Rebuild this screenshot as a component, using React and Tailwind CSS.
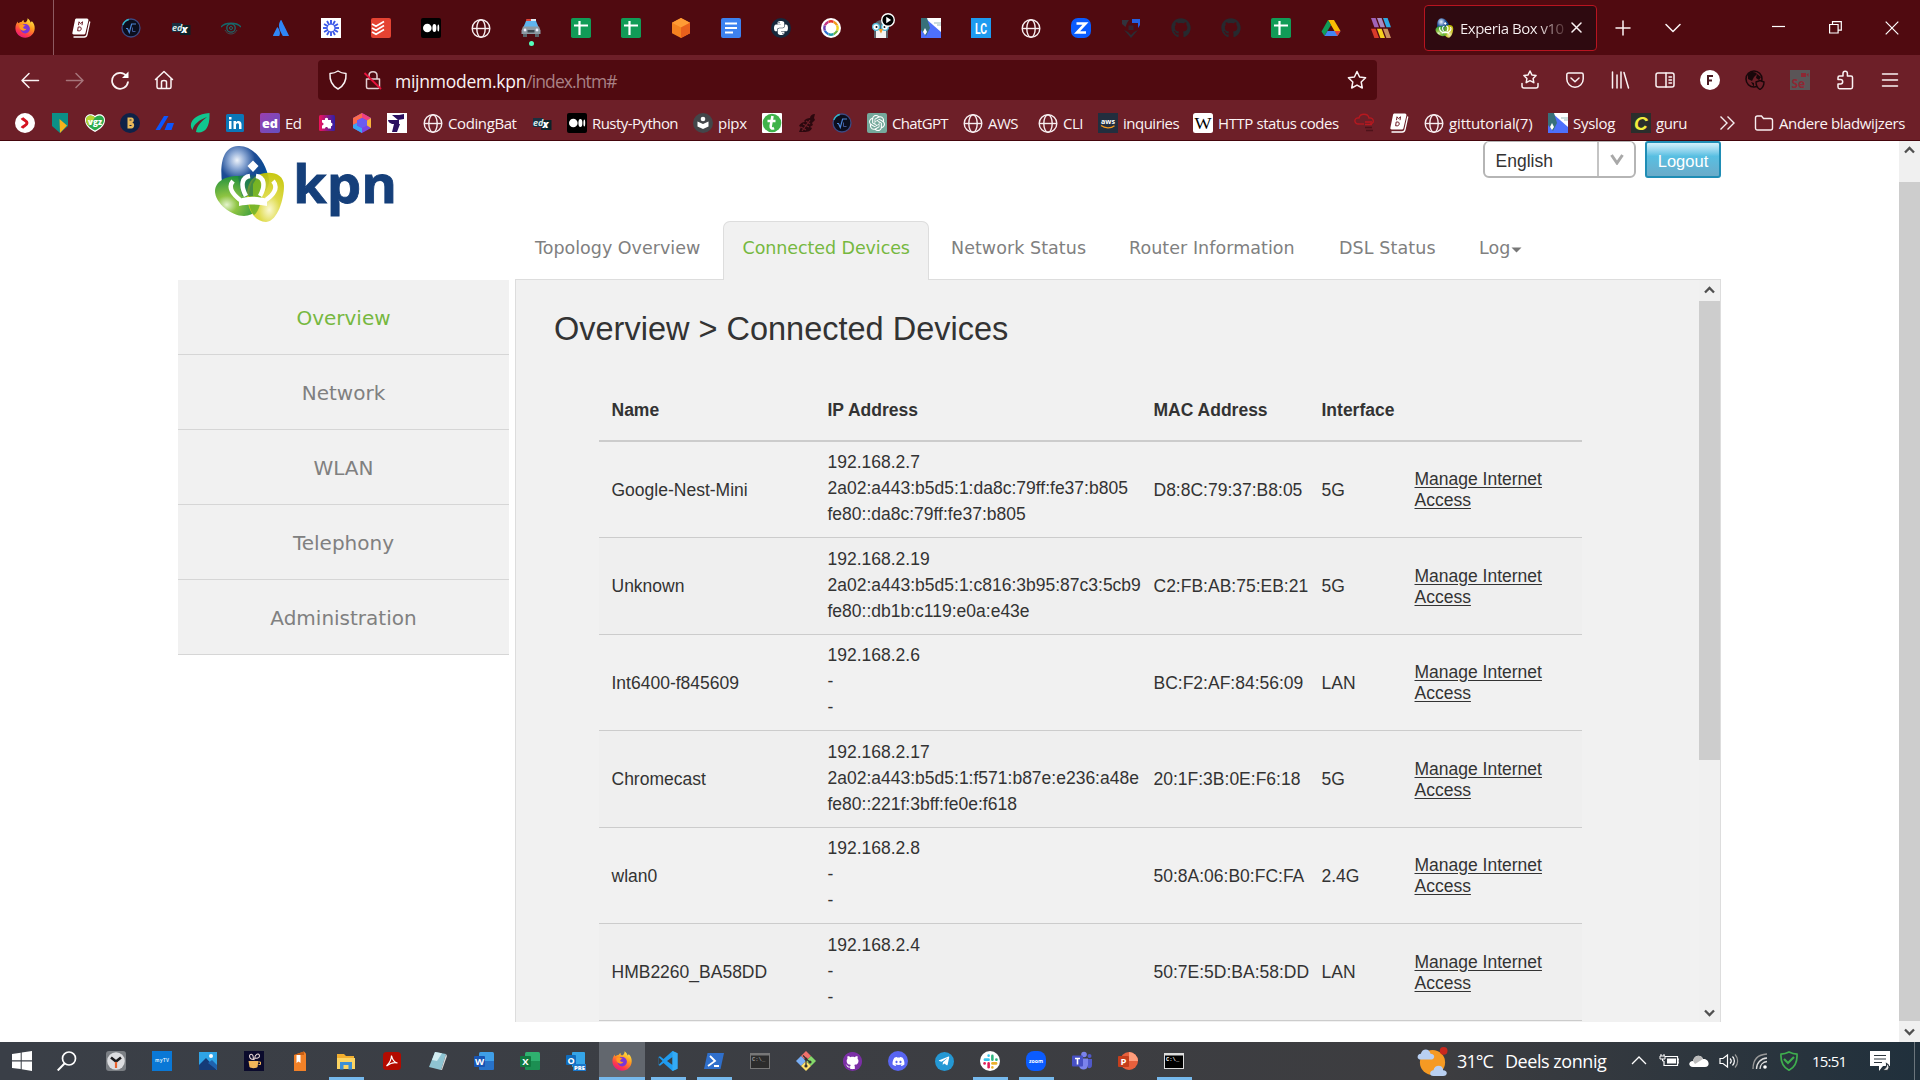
import React from "react";
import { FaGithub, FaPython, FaDiscord, FaTelegramPlane, FaAtlassian } from "react-icons/fa";
import { SiOpenai } from "react-icons/si";

const S = ({ children, size = 20, vb = "0 0 20 20" }) => (
  <svg width={size} height={size} viewBox={vb} fill="none" className="block shrink-0">{children}</svg>
);

/* ---------- site icons, 20 x 20 ---------- */
const Firefox = () => (
  <S>
    <defs>
      <linearGradient id="ffA" x1="0.8" y1="0" x2="0.25" y2="1"><stop offset="0" stopColor="#fff04a" /><stop offset=".4" stopColor="#ff9a1f" /><stop offset=".75" stopColor="#ff3a4a" /><stop offset="1" stopColor="#e31587" /></linearGradient>
    </defs>
    <path d="M12.6 0.2c2.2 1.6 2.6 3 3 4.2 1-.1 1-.9 1-1.3 2.6 2.2 3.2 5 3.1 7.5C19.500 16 15.300 19.700 10.200 19.700 4.800 19.700.5 15.600.4 10.300.4 7 1.600 5 2.800 3.600c0 .8.1 1.200.4 1.700C4.500 4 5.500 3.900 6.500 3.900 7 2.900 7.700 2.200 8.700 1.900c-.3 1.200 0 2 1.300 2.600 1.500-.4 2.700-2.200 2.600-4.300z" fill="url(#ffA)" />
    <circle cx="10.200" cy="10.800" r="4.700" fill="#7a35d8" />
    <path d="M4.500 7.200c2-.9 4.600-.4 6.300.9-1.500 0-2.600.6-2.600 1.500 0 1 1.500 1.600 3.300 1.200-.8 2-4.200 2.700-5.900.8C4.700 10.500 4 8.700 4.500 7.200z" fill="#ff9a20" />
  </S>
);
const Book = () => (
  <S><path d="M5.500 .5h10.500c1 0 1.700 1 1.400 2l-2.900 12.500c-.2 1-1 1.500-2 1.500H2.700c-1 0-1.500-.8-1.300-1.700L4 2C4.200 1 4.700.5 5.500.5z" fill="#fff" /><path d="M18.800 3.500 16 16.500c-.3 1.500-1.200 2.500-2.800 2.500H2.500" stroke="#fff" strokeWidth="1.300" /><path d="M7.500 7.200 8 3.800l1.500 1.800L11.500 3.800 11 7.200M7.200 9h1.800c1.800 0 1.500 3.800-.4 3.800H6.600z" stroke="#6b1b26" /></S>
);
const Root = () => (
  <S><circle cx="10" cy="10" r="9" fill="#0b0e1d" stroke="#3b4a83" strokeWidth="1.300" /><path d="M1.800 7a9 9 0 0 1 6-5.500" stroke="#35b6c8" strokeWidth="1.300" /><path d="M5 10.500h1.500l1.800 4L10.600 6H15" stroke="#4d86d8" strokeWidth="1.200" /><path d="M11.500 9.500v4h3" stroke="#3f5796" /></S>
);
const Edx = () => (
  <S><path d="M1 5h10v9H1z" fill="#1a3040" /><path d="M10 7h9.500v10H9z" fill="#0b2229" /><text x="1" y="12.500" fontSize="9" fontFamily="Open Sans" fontStyle="italic" fontWeight="700" fill="#d8e6e6">ed</text><text x="10.500" y="15" fontSize="10.500" fontFamily="Open Sans" fontStyle="italic" fontWeight="800" fill="#fff">x</text></S>
);
const Eye = () => (
  <S><path d="M0 9c4-5 16-5 20 0" stroke="#14686b" strokeWidth="1.300" /><circle cx="10" cy="10" r="4.200" stroke="#1b6a6d" strokeWidth="1.300" /><circle cx="10" cy="10" r="1.500" stroke="#1b6a6d" /><path d="M4 12c1 2 3 4 6 4s5-2 6-4" stroke="#3a4b52" /></S>
);
const Atl = () => <FaAtlassian size={16} color="#2f86f6" className="block shrink-0" />;
const Burst = () => (
  <S><rect width="20" height="20" fill="#fff" />{[0, 30, 60, 90, 120, 150, 180, 210, 240, 270, 300, 330].map((a) => <path key={a} d="M10 2v4.700" stroke="#3b58e8" strokeWidth="1.900" transform={`rotate(${a} 10 10)`} />)}</S>
);
const Todoist = () => (
  <S><rect width="20" height="20" rx="2" fill="#e44332" />{[0, 4, 8].map((d) => <path key={d} d={`M1 ${6 + d}l4 2.200L13 ${3.5 + d}`} stroke="#fff" strokeWidth="1.700" />)}</S>
);
const Medium = () => (
  <S><rect width="20" height="20" rx="2" fill="#000" /><circle cx="6.300" cy="10" r="4.300" fill="#fff" /><ellipse cx="13.400" cy="10" rx="2" ry="4" fill="#fff" /><ellipse cx="17.300" cy="10" rx=".9" ry="3.600" fill="#fff" /></S>
);
const Globe = () => (
  <S><g stroke="#f7eef0" strokeWidth="1.400"><circle cx="10" cy="10.500" r="8.800" /><ellipse cx="10" cy="10.500" rx="4.200" ry="8.800" /><path d="M1.300 10.500h17.400" /></g></S>
);
const Car = () => (
  <S><rect x="5" y="1" width="10" height="2.500" rx="1" fill="#e04438" /><rect x="10" y="1" width="5" height="2.500" fill="#dfe9f2" /><path d="M5 3h10l2.500 6h-15z" fill="#5fb4ee" /><path d="M2 8.500h16l1.500 4V16H.5v-3.500z" fill="#8d9aa3" /><circle cx="4" cy="12" r="1.400" fill="#eef" /><circle cx="16" cy="12" r="1.400" fill="#eef" /><path d="M6.500 12h7v2.500h-7z" fill="#3c474f" /><path d="M2 16h4v3H2zM14 16h4v3h-4z" fill="#59636a" /></S>
);
const Sheets = () => (
  <S><rect width="20" height="20" rx="1.800" fill="#119c57" /><path d="M3 7.500h14M8.500 3v14" stroke="#fff" strokeWidth="2.200" /></S>
);
const Cube = () => (
  <S><path d="m10 0 9 4.700v10.600L10 20l-9-4.700V4.700z" fill="#f58220" /><path d="m10 0 9 4.700-9 4.700-9-4.700z" fill="#ff9b35" /><path d="M10 9.400 19 4.700v10.600L10 20z" fill="#e9601c" /></S>
);
const Docs = () => (
  <S><rect width="20" height="20" rx="2" fill="#3d82f0" /><path d="M4 5.500h12M4 10h12M4 14.500h8" stroke="#fff" strokeWidth="2" /></S>
);
const Py = () => <span className="flex size-5 shrink-0 items-center justify-center rounded-full bg-[#16283c] text-white"><FaPython size={16} /></span>;
const Wheel = () => (
  <S><circle cx="10" cy="10" r="10" fill="#fff" />{["#e5342b", "#f39a1d", "#f2d21b", "#6cb33f", "#1fa0a8", "#2c6fd1", "#6c3fb0", "#c23484"].map((c, i) => <path key={c} d="M7.500 3.800a7 7 0 0 1 5 0" stroke={c} strokeWidth="2.400" transform={`rotate(${i * 45} 10 10)`} />)}</S>
);
const Penguin = () => (
  <span className="relative block size-5 shrink-0"><S><path d="M3 20V9c0-9 14-9 14 0v11z" fill="#59636b" /><path d="M5 20v-8h10v8z" fill="#f2f2f2" /><g stroke="#4cb9d8" fill="#fff" strokeWidth="1.300"><circle cx="5" cy="9" r="3.400" /><circle cx="14" cy="9" r="3.400" /></g><circle cx="5.500" cy="9" r="1" fill="#111" /><circle cx="13.500" cy="9" r="1" fill="#111" /><path d="m7.500 11 4.500 0-2 4.500z" fill="#f29b25" /></S>
    <span className="absolute -top-[5px] left-[10px]"><S size={14}><circle cx="10" cy="10" r="9" fill="#000" stroke="#fff" strokeWidth="2" /><path d="m7.500 5.500 7 4.500-7 4.500z" fill="#fff" /></S></span></span>
);
const Flag = () => (
  <S><rect width="20" height="20" fill="#4e70fb" /><path d="M4 0h16v14z" fill="#fff" /><path d="M0 0h6l3 10-4 8-5-6z" fill="#38707a" /><path d="m2 14 2-4 2 4-2 3z" fill="#fff" /><path d="M13 5h7M16 7h4" stroke="#9bb" /></S>
);
const LC = () => (
  <S><rect width="20" height="20" fill="#1e9bf0" /><text x="4" y="15.500" textLength="12" lengthAdjust="spacingAndGlyphs" fontSize="15" fontFamily="Roboto" fontWeight="700" fill="#fff">LC</text></S>
);
const Zt = () => (
  <S><rect width="20" height="20" rx="7" fill="#0a5cff" /><path d="M5.500 5.500h9L6 14.500h9" stroke="#fff" strokeWidth="2.600" /></S>
);
const Shield3 = () => (
  <S><path d="M1 2h7L6 5 4.500 9 1 6z" fill="#31333d" /><path d="M11 1h8v6l-2 3V5h-6z" fill="#2460e0" /><path d="m3 12 7 8 7-8-4 2-3 3-3-3z" fill="#2b2c33" /><rect x="7.500" y="7.500" width="5" height="4.500" fill="#33232c" /></S>
);
const Gh = () => <FaGithub size={20} color="#27292e" className="block shrink-0" />;
const Drive = () => (
  <S><path d="M7 2h6l6.500 11h-6z" fill="#fbbc04" /><path d="M7 2 .5 13.500l3 4.500L10 7z" fill="#0f9d58" /><path d="M3.500 18h13l3-5h-13z" fill="#4285f4" /><path d="m16.500 18 3-5h-6z" fill="#ea4335" /></S>
);
const Stripes = () => (
  <S><path d="M0 0h4.600l3.400 9.200H3.400z" fill="#a063b8" /><path d="M6 0h4.600L14 9.200H9.400z" fill="#a98bc4" /><path d="M12 0h4.600L20 9.200h-4.600z" fill="#2fa9e4" /><path d="M0 10.800h4.600L8 20H3.400z" fill="#d93a2b" /><path d="M6 10.800h4.600L14 20H9.400z" fill="#f6cf1e" /><path d="M12 10.800h4.600L20 20h-4.600z" fill="#c9905f" /></S>
);
const KpnMark = ({ w = 72, h = 78, id = "k" }) => (
  <svg width={w} height={h} viewBox="0 0 72 78" className="block shrink-0">
    <defs>
      <radialGradient id={id + "b"} cx=".33" cy=".28" r=".75"><stop offset="0" stopColor="#eef3fa" /><stop offset=".22" stopColor="#8fabd6" /><stop offset=".5" stopColor="#1d4c95" /><stop offset=".8" stopColor="#0b4a92" /><stop offset="1" stopColor="#0583c9" /></radialGradient>
      <radialGradient id={id + "g"} cx=".25" cy=".72" r=".75"><stop offset="0" stopColor="#e4f3cd" /><stop offset=".3" stopColor="#8ec442" /><stop offset="1" stopColor="#1d8f3d" /></radialGradient>
      <radialGradient id={id + "y"} cx=".6" cy=".75" r=".75"><stop offset="0" stopColor="#fbf9cf" /><stop offset=".4" stopColor="#dcd83e" /><stop offset="1" stopColor="#c4c400" /></radialGradient>
    </defs>
    <path d="M8 38C6 20 8 2 24 1c15-1 28 16 31 33 1 10-7 18-18 18C22 52 9 49 8 38z" fill={`url(#${id}b)`} />
    <path d="M1 46c0-10 12-15 22-15 12 0 25 4 25 16 0 13-6 24-18 24C17 71 1 58 1 46z" fill={`url(#${id}g)`} />
    <path d="M44 30c12-5 26-2 26 11 0 12-6 35-18 36-12 0-19-14-19-27 0-9 3-16 11-20z" fill={`url(#${id}y)`} fillOpacity=".93" />
    <path d="M35 52c0-9 2-17 9-21 5 6 5 33-4 39-4-4-5-10-5-18z" fill="#5fae2a" fillOpacity=".75" />
    <path d="M24 31c3-1 14-1 20 0l-5 8v12H28z" fill="#1d6d5c" fillOpacity=".55" />
    <g fill="none" stroke="#fff" strokeWidth="4.500"><path d="M26 55c-6-5-13-12-7-19M32 51c-6-11-4-19 4-20M46 51c6-11 4-19-4-20M52 55c7-5 13-12 7-19" /></g>
    <path d="m39 15.500 5.500 5.500L39 27l-5.500-6z" fill="#fff" />
    <path d="M25 54c9-3 19-3 28 0v7c-9-2-19-2-28 0z" fill="#fff" />
  </svg>
);

const tabs = [
  [Book], [Root], [Edx], [Eye], [Atl], [Burst], [Todoist], [Medium], [Globe], [Car, true], [Sheets], [Sheets], [Cube], [Docs], [Py],
  [Wheel], [Penguin], [Flag], [LC], [Globe], [Zt], [Shield3], [Gh], [Gh], [Sheets], [Drive], [Stripes],
];

/* ---------- bookmark icons ---------- */
const RedArrow = () => (<S><circle cx="10" cy="10" r="10" fill="#fff" /><path d="M7 5c1 2 5 2.500 5 5s-4 3-5 5" stroke="#d41420" strokeWidth="3" /></S>);
const Abn = () => (<S><path d="M2 0h16v13l-8 7-8-7z" fill="#0b8f86" /><path d="M9.500 6 17 12.500 10 20z" fill="#f6b21b" /></S>);
const Vgz = () => (<S><path d="M10 19C4 16 0 12 0 7 0 1 7 0 10 3c3-3 10-2 10 4 0 5-4 9-10 12z" fill="#fff" /><path d="M10 17.500C4.500 15 1 11 1 7c0-5 6-6 9-2.500C13 1 19 2 19 7c0 4-3.500 8-9 10.500z" fill="#2bab4c" /><path d="M1 7c0-5 6-6 9-2.500L4 13C2 11 1 9 1 7z" fill="#b8d431" /><text x="3" y="12" fontSize="8.500" fontFamily="Open Sans" fontWeight="800" fill="#fff" textLength="14" lengthAdjust="spacingAndGlyphs">vgz</text></S>);
const Coin = () => (<S><circle cx="10" cy="10" r="10" fill="#0e2248" /><path d="M7.500 4.500h4c3 0 3 5 .5 5 3 0 3 6-.5 6h-4z" fill="#e8b95b" /><path d="M9.500 7h2M9.500 12.500h2" stroke="#0e2248" strokeWidth="1.200" /></S>);
const Blue2 = () => (<S><path d="M9 3h4.500L5 17H.5z" fill="#0b56ff" /><path d="M12.500 10H19l-2.500 7h-7z" fill="#0b56ff" /></S>);
const Leaf = () => (<S><path d="M19.500 0c.5 12-3 19.500-11 19.500-1 0-2-.2-2.500-.5C7 12 12 8 17 4 9 7 4 11 2.500 17-3 9 6 1 19.500 0z" fill="#10c78f" /></S>);
const In = () => (<S><rect x="1" y="1" width="18" height="18" rx="1.500" fill="#0b77b8" /><path d="M4 8h2.500v8H4zM4 4h2.500v2.400H4zM8.500 8H11v1.200c1.500-2.200 5.500-1.700 5.500 2V16H14v-4.200c0-2.200-3-2.200-3 0V16H8.500z" fill="#fff" /></S>);
const Ed = () => (<S><defs><linearGradient id="edg" x2="1" y2="1"><stop stopColor="#9a3fae" /><stop offset="1" stopColor="#6450c0" /></linearGradient></defs><rect width="20" height="20" rx="2" fill="url(#edg)" /><text x="2" y="15" fontSize="13" fontFamily="Open Sans" fontWeight="800" fill="#fff" textLength="16" lengthAdjust="spacingAndGlyphs">ed</text></S>);
const Puzzle = () => (<S><defs><linearGradient id="pzg"><stop stopColor="#f5125a" /><stop offset="1" stopColor="#2c1fa8" /></linearGradient></defs><rect x="2" y="2" width="16" height="16" rx="1.500" fill="url(#pzg)" /><path d="M5 7h3c-1-3 4-3 3 0h3v3c2-1 2 4 0 3v2.500h-3c0-2-3-2-3 0H5v-3c2 0 2-3 0-3z" fill="#fff" /></S>);
const Hexa = () => (<S><path d="m10 0 9 5v10l-9 5-9-5V5z" fill="#7b45e0" /><path d="M1 5 10 0v5L5 7.500V10L1 12z" fill="#fb6a4e" /><path d="m10 0 9 5-4 2.500L10 5z" fill="#f0407e" /><path d="M19 5v10l-4-2.500v-5z" fill="#f9b53a" /><path d="M1 12v3l9 5v-5l-5-2.500V10z" fill="#3aa5f3" /><path d="m10 5 5 2.500v5L10 15l-5-2.500v-5z" fill="#6a5cf0" /></S>);
const Seven = () => (<S><rect width="20" height="20" fill="#fff" /><path d="M5 2c6 0 9 0 12-1v5l-6 1zM1 7h11v4H5C3 10 1 9 1 7z" fill="#2a1060" /><path d="M7 11h6l-3 8H5z" fill="#2a1060" /></S>);
const Pipx = () => (<S><circle cx="10" cy="10" r="10" fill="#43464a" /><circle cx="10" cy="6" r="2.300" fill="#fff" /><path d="M4.500 8.500 10 11l5.500-2.500v5L10 16l-5.500-2.500z" fill="#fff" /></S>);
const Tt = () => (<S><rect width="20" height="20" rx="1" fill="#fff" /><circle cx="10" cy="10" r="9.300" fill="#3fb34a" /><path d="M10.500 3 8.700 13c-.3 2.500 1.500 3 3.300 2M5.500 8h8" stroke="#fff" strokeWidth="2.600" /></S>);
const Feather = () => (<S><path d="M18 1c-3 0-5 2-5 4-2 0-5 1-6 3l1 1c-3 0-5 2-6 4l2 1-2 5h5c4 0 7-1 8-4l-2-1 3-2-1-2 3-3-1-2z" fill="#2b080e" /><path d="m5 18 8-11M4 14l5 3M6 11l6 3M9 8l4 3" stroke="#6d1f28" strokeWidth="1.100" /></S>);
const Gpt = () => <span className="flex size-5 shrink-0 items-center justify-center rounded-[2px] bg-[#75a99c] text-white"><SiOpenai size={16} /></span>;
const Aws = () => (<S><rect width="20" height="20" fill="#222e3e" /><text x="3" y="10.500" fontSize="7.500" fontFamily="Open Sans" fontWeight="700" fill="#fff" textLength="14" lengthAdjust="spacingAndGlyphs">aws</text><path d="M3 12.500c4 3 10 3 13.500.2" stroke="#f79a1d" strokeWidth="1.300" /></S>);
const Wiki = () => (<S><rect width="20" height="20" rx="2.500" fill="#fff" /><text x="1.500" y="16" fontSize="17" fontFamily="Liberation Serif" fill="#000" textLength="17" lengthAdjust="spacingAndGlyphs">W</text></S>);
const Cloud = () => (<S><path d="M5 11c-6 0-5-7 0-6 1-5 9-5 10 0 5-1 6 6 1 6" stroke="#b8181f" strokeWidth="1.300" /><path d="M5 11h5" stroke="#b8181f" strokeWidth="1.300" /><path d="M11 9h7M11 11.500h7" stroke="#b8181f" strokeWidth="1.300" /><path d="M11 14.500h7M12 17.500h7" stroke="#4d1219" strokeWidth="1.600" /></S>);
const Guru = () => (<S><rect width="20" height="20" fill="#2a2e2c" /><text x="3" y="17" fontSize="19" fontFamily="Liberation Sans" fontStyle="italic" fontWeight="700" fill="#f2ec3c">C</text></S>);
const Chev2 = () => (<S><path d="m3.500 3.500 6.500 6.500-6.500 6.500M10.500 3.500 17 10l-6.500 6.500" stroke="#f7eef0" strokeWidth="1.400" /></S>);
const Folder = () => (<S><path d="M1.500 5c0-1.200.7-2 2-2h4l2 2.500h7c1.300 0 2 .8 2 2V15c0 1.200-.7 2-2 2h-13c-1.300 0-2-.8-2-2z" stroke="#f7eef0" strokeWidth="1.400" /></S>);

const bookmarks = [
  [RedArrow, "w-[35px]"], [Abn, "w-[35px]"], [Vgz, "w-[35px]"], [Coin, "w-[35px]"], [Blue2, "w-[35px]"], [Leaf, "w-[35px]"], [In, "w-[35px]"],
  [Ed, "w-[57px]", "Ed", "tracking-[-0.6px]"], [Puzzle, "w-[35px]"], [Hexa, "w-[35px]"], [Seven, "w-[36px]"],
  [Globe, "w-[109px]", "CodingBat", "tracking-[-0.4px]"], [Edx, "w-[35px]"], [Medium, "w-[126px]", "Rusty-Python", "tracking-[-0.55px]"],
  [Pipx, "w-[69px]", "pipx", "tracking-[-0.3px]"], [Tt, "w-[35px]"], [Feather, "w-[35px]"], [Root, "w-[35px]"],
  [Gpt, "w-[96px]", "ChatGPT", "tracking-[-0.65px]"], [Globe, "w-[75px]", "AWS", "tracking-[-0.5px]"], [Globe, "w-[60px]", "CLI", "tracking-[-0.5px]"],
  [Aws, "w-[95px]", "inquiries", "tracking-[-0.5px]"], [Wiki, "w-[161px]", "HTTP status codes", "tracking-[-0.42px]"], [Cloud, "w-[35px]"], [Book, "w-[35px]"],
  [Globe, "w-[124px]", "gittutorial(7)", "tracking-[-0.15px]"], [Flag, "w-[83px]", "Syslog", "tracking-[-0.3px]"], [Guru, "w-[86px]", "guru", "tracking-[-0.4px]"],
  [Chev2, "w-[37px]"], [Folder, "w-[152px]", "Andere bladwijzers", "tracking-[-0.4px]"],
];

const line = { stroke: "#fbf3f4", strokeWidth: 1.5, strokeLinecap: "round", strokeLinejoin: "round" };

const toolbarIcons = [
  <S key="1"><path d="m10 1 1.900 3.900 4.200.6-3 3 .7 4.200-3.800-2-3.800 2 .7-4.200-3-3 4.200-.6z" {...line} /><path d="M2 13.500v2.500c0 1.300.7 2 2 2h12c1.300 0 2-.7 2-2v-2.500" {...line} /></S>,
  <S key="2"><path d="M3.500 3h13c1 0 1.700.7 1.700 1.700V9c0 4.500-3.700 8.200-8.200 8.200S1.800 13.500 1.800 9V4.700C1.800 3.700 2.500 3 3.500 3z" {...line} /><path d="m6 8 4 3.800L14 8" {...line} /></S>,
  <S key="3"><path d="M2.500 2v16M7 5v13M11 2v16M14 2.500 18.500 18" {...line} /></S>,
  <S key="4"><rect x="1" y="3" width="18" height="14" rx="2" {...line} /><path d="M11 3v14M14 7h2.500M14 10h2.500M14 13h2.500" {...line} /></S>,
  <S key="5"><circle cx="10" cy="10" r="10" fill="#fff" /><path d="M8 15V6h5M8 10.500h4" stroke="#4a1b22" strokeWidth="2" /></S>,
  <S key="6"><circle cx="9" cy="9" r="8" stroke="#19070a" strokeWidth="1.500" /><path d="M3 4c3-3 8-2 9 0l-3 3-2 4-4-2zM6 12l3 1v4zM12 4l4 3-2 3-3-2z" fill="#19070a" /><path d="M11 12l4-1.500 4 1.500c0 4-1.500 6-4 7.500-2.500-1.500-4-3.500-4-7.500z" fill="#6c1f29" stroke="#19070a" strokeWidth="1.400" /></S>,
  <S key="7"><rect width="20" height="20" fill="#5a5557" /><text x="1.500" y="17.500" fontSize="12" fontFamily="Open Sans" fontWeight="700" fill="#8d2733">Se</text><path d="M11 3h5v4h-5zM16.500 4.500 18.500 3v4z" fill="#8d2733" /></S>,
  <S key="8"><path d="M8 5V3.500a2.200 2.200 0 0 1 4.400 0V6H16c1 0 1.500.5 1.500 1.500V17c0 1-.5 1.700-1.500 1.700H4.500c-1 0-1.500-.7-1.500-1.700v-3h2.500a2.200 2.200 0 0 0 0-4.400H3V7.500C3 6.500 3.500 6 4.500 6H8z" {...line} /></S>,
  <S key="9"><path d="M2.500 4h15M2.500 10h15M2.500 16h15" {...line} /></S>,
];

/* ---------- router page data ---------- */
const nav = [
  ["Topology Overview", "w-[208px] pl-[20px]"],
  ["Connected Devices", "w-[206px] pl-[18.5px] tracking-[-0.08px]"],
  ["Network Status", "w-[178px] pl-[22px] tracking-[0.05px]"],
  ["Router Information", "w-[210px] pl-[22px] tracking-[0.05px]"],
  ["DSL Status", "w-[140px] pl-[22px] tracking-[0.1px]"],
  ["Log", "w-[80px] pl-[22px]"],
];
const rows = [
  ["Google-Nest-Mini", ["192.168.2.7", "2a02:a443:b5d5:1:da8c:79ff:fe37:b805", "fe80::da8c:79ff:fe37:b805"], "D8:8C:79:37:B8:05", "5G"],
  ["Unknown", ["192.168.2.19", "2a02:a443:b5d5:1:c816:3b95:87c3:5cb9", "fe80::db1b:c119:e0a:e43e"], "C2:FB:AB:75:EB:21", "5G"],
  ["Int6400-f845609", ["192.168.2.6", "-", "-"], "BC:F2:AF:84:56:09", "LAN"],
  ["Chromecast", ["192.168.2.17", "2a02:a443:b5d5:1:f571:b87e:e236:a48e", "fe80::221f:3bff:fe0e:f618"], "20:1F:3B:0E:F6:18", "5G"],
  ["wlan0", ["192.168.2.8", "-", "-"], "50:8A:06:B0:FC:FA", "2.4G"],
  ["HMB2260_BA58DD", ["192.168.2.4", "-", "-"], "50:7E:5D:BA:58:DD", "LAN"],
];
const cols = "grid grid-cols-[216px_326px_168px_93px_168px] pl-[12.5px]";

const Arrow = ({ up }) => (
  <svg width="11" height="8" viewBox="0 0 11 8" fill="none" className="block"><path d={up ? "M1 6.500 5.500 2 10 6.500" : "M1 1.500 5.500 6 10 1.500"} stroke="#505050" strokeWidth="2.300" /></svg>
);

/* ---------- taskbar ---------- */
const Tile = ({ c, t, dark }) => (
  <S><rect x="5" y="1" width="15" height="18" rx="1.500" fill={c} /><path d="M5 10h15v9H5z" fill={dark} fillOpacity=".6" /><rect x="0" y="5" width="11" height="11" rx="1" fill={dark} /><text x="5.500" y="14" textAnchor="middle" fontSize="9.500" fontFamily="Open Sans" fontWeight="700" fill="#fff">{t}</text></S>
);
const Term = ({ dim }) => (
  <S><rect x="0" y="2" width="20" height="16" fill={dim ? "#777" : "#ddd"} /><rect x="1" y="4.500" width="18" height="12.500" fill={dim ? "#2c2c2c" : "#000"} /><text x="2" y="10" fontSize="5.500" fontFamily="Liberation Mono" fontWeight="700" fill={dim ? "#999" : "#fff"}>C:\_</text></S>
);
const task = [
  [<S key="c"><rect width="20" height="20" rx="3" fill="#7b7f84" /><circle cx="10" cy="10" r="8.800" fill="#dcdde0" /><path d="M10 10.500 5 6.500M10 10.500l5-4" stroke="#1c1c1e" strokeWidth="2.600" /><path d="M10 11v6" stroke="#e8612c" strokeWidth="2.200" /></S>],
  [<S key="m"><rect width="20" height="20" fill="#0a78d6" /><text x="3" y="11" fontSize="4.500" fontFamily="Open Sans" fontWeight="700" fill="#cfe6fa" textLength="14">myTV</text></S>],
  [<S key="p"><rect x="1" y="1" width="18" height="18" fill="#2fa4e7" /><path d="m1 19 0-5 7-7 11 12z" fill="#153b78" /><path d="m10 12 4-3 5 5v5z" fill="#1f62ae" /><circle cx="13" cy="5" r="2" fill="#fff" /></S>],
  [<S key="d"><rect width="20" height="20" fill="#0a0a2c" /><path d="M4.500 10h10l-1 6c-1 1.500-7 1.500-8 0z" fill="#f0b55a" /><path d="M9.500 8.500C4 8 5 2 8 3.500c2 1 1 4 1.500 5zM10.500 8.500c0-6 5-7 5-3.500 0 2-3 3-5 1.500" stroke="#e9d9d9" strokeWidth="1.100" /><path d="M14.500 11h2v2.500h-2" stroke="#f0b55a" /></S>],
  [<S key="o"><path d="M4 4 14 .5l2 2V20H4z" fill="#f28127" /><path d="M4 4 14 .5V4z" fill="#c85f14" /><path d="M6.500 4h4v8l-2-1.500-2 1.500z" fill="#fff" /></S>],
  [<S key="e"><path d="M1 3h7l2 2h8v12H1z" fill="#f2ae2e" /><path d="M1 7h18v11H1z" fill="#fcd462" /><path d="M4 11h12v7.500h-3.500V14h-5v4.500H4z" fill="#3d8fd6" /></S>, "u"],
  [<S key="a"><rect x="1" y="1" width="18" height="18" rx="3.500" fill="#b30b00" /><path d="M4.500 15c2-2 5-6 5-10.500 1 5 3 7 6 7.500-3-1-7 0-11 3z" stroke="#fff" strokeWidth="1.200" /></S>],
  [<S key="n"><path d="m7 1 11 2-5 16L1 16z" fill="#8ec4d2" /><path d="m7 1 7 1.300L9 10 4 9z" fill="#d3ecf1" /><path d="m18 3 1 2-5 14-1 0z" fill="#d9d9d9" /></S>],
  [<Tile key="w" c="#3f9fe8" dark="#1855b4" t="W" />],
  [<Tile key="x" c="#2fb06f" dark="#107940" t="X" />],
  [<S key="ol"><rect x="6" y="1" width="13" height="15" rx="1" fill="#35a5e8" /><rect x="0" y="4" width="10" height="10" rx="1" fill="#0f6cbd" /><text x="5" y="12.500" textAnchor="middle" fontSize="9" fontFamily="Open Sans" fontWeight="700" fill="#fff">O</text><rect x="7" y="13" width="13" height="7" fill="#1976c9" /><text x="8" y="19" fontSize="5.500" fontFamily="Open Sans" fontWeight="800" fill="#fff" textLength="11" lengthAdjust="spacingAndGlyphs">PRE</text></S>],
  [<Firefox key="ff" />, "a"],
  [<S key="v"><path d="m14.500 0 5 2.300v15.400l-5 2.300L5.500 12 2 14.800.5 14v-8L2 5.200 5.500 8z" fill="#1f9cf0" /><path d="M14.500 6 9 10l5.500 4z" fill="#3a3d41" /><path d="m.5 6 4 4-4 4" fill="#3a3d41" /><path d="m14.500 0 5 2.300v15.400l-5 2.300z" fill="#34aaf5" /></S>, "u"],
  [<S key="ps"><path d="M3.500 2H20l-3.500 16H0z" fill="#2f6fcb" /><path d="m6 5 5 5-7 5M10 15h5" stroke="#fff" strokeWidth="1.800" /></S>, "u"],
  [<Term key="t1" dim />],
  [<S key="g"><path d="M10 0l5 5-5 5-5-5z" fill="#f0716b" /><path d="m5 5 5 5-5 5-5-5z" fill="#79aef5" /><path d="m15 5 5 5-5 5-5-5z" fill="#84d96a" /><path d="m10 10 5 5-5 5-5-5z" fill="#ffe16b" /><path d="m7 4.500 3 3V15M10 8l4 3" stroke="#333" strokeWidth="1.200" /><circle cx="10" cy="8" r="1.600" fill="#333" /><circle cx="14" cy="11" r="1.600" fill="#333" /><circle cx="10" cy="15" r="1.600" fill="#333" /></S>],
  [<span key="gh" className="flex size-[19px] items-center justify-center rounded-full bg-[radial-gradient(#ffffff_55%,#7b2fa6_60%)] text-[#7b2fa6]"><FaGithub size={19} /></span>],
  [<span key="dc" className="flex size-5 items-center justify-center rounded-full bg-[#5865f2] text-white"><FaDiscord size={13} /></span>],
  [<span key="tg" className="flex size-[19px] items-center justify-center rounded-full bg-[#2498d4] text-white"><FaTelegramPlane size={12} /></span>],
  [<span key="sl" className="flex size-5 items-center justify-center rounded-full bg-white">
    <S size={15}><g strokeWidth="3.400" strokeLinecap="round"><path d="M2.500 7.500h5" stroke="#36c5f0" /><path d="M7.500 2v.2" stroke="#36c5f0" /><path d="M12.500 2.500v5" stroke="#2eb67d" /><path d="M18 7.500h-.2" stroke="#2eb67d" /><path d="M12.500 12.500h5" stroke="#ecb22e" /><path d="M12.500 18v-.2" stroke="#ecb22e" /><path d="M7.500 12.500v5" stroke="#e01e5a" /><path d="M2 12.500h.2" stroke="#e01e5a" /></g></S></span>, "u"],
  [<S key="z"><rect width="20" height="20" rx="8" fill="#0b5cff" /><text x="3" y="12" fontSize="6" fontFamily="Open Sans" fontWeight="700" fill="#fff" textLength="14" lengthAdjust="spacingAndGlyphs">zoom</text></S>, "u"],
  [<S key="tm"><circle cx="12" cy="3.500" r="2.800" fill="#7b83eb" /><circle cx="17.500" cy="5" r="2" fill="#5059c9" /><path d="M7 7.500h9V14c0 6-9 6-9 0z" fill="#7b83eb" /><path d="M16 8h4v6c0 3-2.500 3.500-4 3z" fill="#5059c9" /><rect x="0" y="4.500" width="11" height="11" rx="1" fill="#4750c4" /><path d="M3 7.500h5M5.500 7.500v6" stroke="#fff" strokeWidth="1.600" /></S>],
  [<S key="pp"><circle cx="11" cy="10" r="9" fill="#e8603c" /><path d="M11 1a9 9 0 0 1 9 9h-9z" fill="#ff9d7c" /><rect x="0" y="5" width="11" height="11" rx="1" fill="#c43e1c" /><text x="5.500" y="14" textAnchor="middle" fontSize="9.500" fontFamily="Open Sans" fontWeight="700" fill="#fff">P</text></S>],
  [<Term key="t2" />, "u"],
];

const Tray = ({ children }) => <div className="flex w-[30px] shrink-0 justify-center">{children}</div>;

export default function App() {
  return (
    <div className="flex h-[1080px] w-[1920px] flex-col overflow-hidden bg-white font-['Open_Sans',sans-serif]">
      {/* tab strip */}
      <div className="flex h-[55px] shrink-0 items-center bg-[#500a10]">
        <div className="flex h-full w-[54px] items-center border-r border-[#8d5a60] pl-[15px]"><Firefox /></div>
        <div className="flex pl-[2px]">
          {tabs.map(([Icon, dot], i) => (
            <div key={i} className="relative flex w-[50px] items-center justify-center">
              <Icon />
              {dot && <span className="absolute top-[23px] size-[5px] rounded-full bg-[#54ffbd]" />}
            </div>
          ))}
        </div>
        <div className="ml-[18px] flex h-[46px] w-[173px] shrink-0 items-center rounded-[4px] border border-[#b81420] bg-[#2e0a10] pl-[10px] text-[15px] text-[#fbf3f4]">
          <KpnMark w={19} h={20} id="s" />
          <span className="ml-[6px] w-[111px] whitespace-nowrap bg-gradient-to-r from-[#fbf3f4] from-70% to-[#2e0a10] bg-clip-text pt-[2px] tracking-[-0.5px] text-transparent">Experia Box v10</span>
          <S size={11} vb="0 0 11 11"><path d="m1 1 9 9M10 1l-9 9" {...line} /></S>
        </div>
        <div className="flex grow items-center">
          <div className="ml-[18px]"><S size={16} vb="0 0 16 16"><path d="M8 1v14M1 8h14" {...line} /></S></div>
          <div className="ml-[34px]"><S size={16} vb="0 0 16 16"><path d="m1 4.500 7 7 7-7" {...line} /></S></div>
          <div className="ml-[91px]"><S size={13} vb="0 0 13 13"><path d="M0 5.500h13" stroke="#fff" strokeWidth="1.200" /></S></div>
          <div className="ml-[44px]"><S size={13} vb="0 0 13 13"><path d="M.6 3.500h8.500v8.500H.6zM3.500 3.500V.7h8.800v8.500H9.200" stroke="#fff" strokeWidth="1.200" /></S></div>
          <div className="ml-[43px]"><S size={14} vb="0 0 14 14"><path d="m.7.7 12.600 12.600M13.300.7.7 13.300" stroke="#fff" strokeWidth="1.200" /></S></div>
        </div>
      </div>

      {/* navigation toolbar */}
      <div className="flex h-[50px] shrink-0 items-center bg-[#6d1f28]">
        <div className="flex w-[318px] items-center pl-5">
          <div className="w-[45px]"><S><path d="M18.500 10.500H2M9 3.500l-7 7 7 7" {...line} /></S></div>
          <div className="w-[45px] opacity-40"><S><path d="M1.500 10.500H18M11 3.500l7 7-7 7" {...line} /></S></div>
          <div className="w-[44px]"><S><path d="M16.500 6A8 8 0 1 0 18 12" {...line} strokeWidth="1.700" /><path d="M18.500 1.500v6.500H12z" fill="#fff" /></S></div>
          <S><path d="M1.500 9.500 10 1.500l8.500 8M3 8.500V17c0 1 .5 1.500 1.500 1.500h11c1 0 1.500-.5 1.500-1.500V8.500M7.500 18v-6c0-2 5-2 5 0v6" {...line} /></S>
        </div>
        <div className="flex h-[40px] w-[1059px] shrink-0 items-center rounded-[4px] bg-[#500a10] pl-[10px]">
          <S><path d="M10 1c3 2 5 2.300 8 2.500.5 7-1.500 12-8 15.500C3.500 15.500 1.500 10.500 2 3.500 5 3.300 7 3 10 1z" {...line} /></S>
          <div className="ml-[15px]"><S><path d="M3.500 9h13v8c0 1-.5 1.500-1.500 1.500H5c-1 0-1.500-.5-1.500-1.500zM6 9V5.500C6 .5 14 .5 14 5.500V9" {...line} stroke="#e3d0d2" /><path d="M1.500 3 18 19" stroke="#e8123c" strokeWidth="1.800" /></S></div>
          <div className="ml-[12px] grow pt-[2px] text-[17.5px] tracking-[-0.25px] text-[#fbf3f4]">mijnmodem.kpn<span className="tracking-[-0.9px] text-[#a98185]">/index.htm#</span></div>
          <div className="mr-[10px]"><S><path d="M10 1.500l2.600 5.500 6 .8-4.400 4.200 1.100 6L10 15.100 4.700 18l1.100-6L1.400 7.800l6-.8z" {...line} /></S></div>
        </div>
        <div className="ml-[130px] flex">{toolbarIcons.map((ic, i) => <div key={i} className="flex w-[45px] justify-center">{ic}</div>)}</div>
      </div>

      {/* bookmarks bar */}
      <div className="flex h-[36px] shrink-0 items-center border-b border-[#45060d] bg-[#6d1f28] pl-[15px] text-[15px] text-[#fbf3f4]">
        {bookmarks.map(([Icon, w, label, tr], i) => (
          <div key={i} className={`flex shrink-0 items-center gap-[5px] ${w}`}>
            <Icon />
            {label && <span className={`whitespace-nowrap pt-[2px] ${tr}`}>{label}</span>}
          </div>
        ))}
      </div>

      {/* page */}
      <div className="flex h-[901px] shrink-0">
        <div className="flex w-[1899px] flex-col">
          <header className="flex h-[80px] shrink-0 items-start">
            <div className="ml-[214px] mt-[4px] flex">
              <KpnMark id="l" />
              <svg width="110" height="78" viewBox="0 0 110 78" className="ml-[7px] block"><text x="0" y="58" fontSize="51.500" fontFamily="Open Sans" fontWeight="700" fill="#153f7a" stroke="#153f7a" strokeWidth=".8" textLength="104" lengthAdjust="spacingAndGlyphs">kpn</text></svg>
            </div>
            <div className="grow" />
            <div className="flex h-[37px] w-[153px] items-stretch rounded-[6px] border-2 border-t border-[#b5b5b5] font-['Liberation_Sans',sans-serif] text-[17.5px] text-[#333]">
              <div className="flex grow items-center pl-[10.5px] pt-[4px]">English</div>
              <div className="flex w-[37px] items-center justify-center border-l-2 border-[#c4c4c4]">
                <svg width="14" height="11" viewBox="0 0 14 11" fill="none"><path d="m1.500 1 5.500 8L12.500 1" stroke="#a8a8a8" strokeWidth="3" /></svg>
              </div>
            </div>
            <div className="ml-[9px] mr-[178px] flex h-[37px] w-[76px] items-center justify-center rounded-[3px] border-2 border-[#1f8db5] bg-gradient-to-b from-[#d3f1fc] via-[#57bfe2] via-40% to-[#6aabc9] pt-[4px] font-['Liberation_Sans',sans-serif] text-[16.5px] text-white">Logout</div>
          </header>

          <nav className="z-10 -mb-px flex h-[59px] shrink-0 pl-[515px] font-['DejaVu_Sans',sans-serif] text-[17.5px] text-[#808080]">
            {nav.map(([label, w], i) => (
              <div key={label} className={`flex shrink-0 items-start whitespace-nowrap leading-7 ${w} ${i === 1 ? "rounded-t-[7px] border border-b-0 border-[#dddddd] bg-[#f1f1f1] pt-[12px] text-[#76b83f]" : "mb-px pt-[13px]"}`}>
                {label}
                {label === "Log" && <svg width="11" height="6" viewBox="0 0 11 6" className="ml-px mt-[13px]"><path d="M.5.500h10L5.500 5.500z" fill="#777" /></svg>}
              </div>
            ))}
          </nav>

          <div className="flex h-[743px] shrink-0 pl-[178px]">
            <aside className="mt-px w-[331px] shrink-0 font-['DejaVu_Sans',sans-serif] text-[20px] text-[#808080]">
              {["Overview", "Network", "WLAN", "Telephony", "Administration"].map((t, i) => (
                <div key={t} className={`flex h-[75px] items-center justify-center border-b border-[#d6d6d6] bg-[#f1f1f1] pt-[2px] ${i === 0 ? "text-[#76b83f]" : ""}`}>{t}</div>
              ))}
            </aside>
            <main className="ml-[6px] flex w-[1206px] shrink-0 overflow-hidden border-x border-t border-[#dddddd] bg-[#f1f1f1] font-['Liberation_Sans',sans-serif] text-[17.5px] text-[#333]">
              <div className="flex grow flex-col">
                <h1 className="ml-[38px] mt-[29px] h-[40px] text-[32.5px] leading-10">Overview &gt; Connected Devices</h1>
                <div className="ml-[83px] mt-[43px] w-[983px]">
                  <div className={`${cols} h-[50px] border-b-2 border-[#cccccc] font-bold leading-[36px]`}>
                    <div>Name</div><div>IP Address</div><div>MAC Address</div><div>Interface</div>
                  </div>
                  {rows.map(([name, ips, mac, iface], i) => (
                    <div key={name} className={`${cols} items-center border-b border-[#cccccc] ${i % 2 ? "h-[97px] bg-[#efefef]" : "h-[96px]"}`}>
                      <div className="leading-[20px]">{name}</div>
                      <div className={`leading-[26px] ${i % 2 ? "pb-[2px]" : "pb-[3px]"}`}>{ips.map((ip, k) => <div key={k}>{ip}</div>)}</div>
                      <div className="leading-[20px]">{mac}</div>
                      <div className="leading-[20px]">{iface}</div>
                      <div className={`leading-[21px] underline underline-offset-2 ${i % 2 ? "pt-[2px]" : ""}`}>Manage Internet<br />Access</div>
                    </div>
                  ))}
                </div>
              </div>
              <div className="flex w-[21px] shrink-0 flex-col items-center bg-[#f0f0f0]">
                <div className="flex h-[21px] items-center pb-[2px]"><Arrow up /></div>
                <div className="h-[459px] w-full bg-[#cdcdcd]" />
                <div className="grow" />
                <div className="flex h-[19px] items-center"><Arrow /></div>
              </div>
            </main>
          </div>
        </div>
        <div className="flex w-[21px] flex-col items-center bg-[#f0f0f0]">
          <div className="flex h-[41px] items-start pt-[5px]"><Arrow up /></div>
          <div className="w-full grow bg-[#cdcdcd]" />
          <div className="flex h-[21px] items-center"><Arrow /></div>
        </div>
      </div>

      {/* taskbar */}
      <div className="flex h-[38px] shrink-0 items-center bg-gradient-to-r from-[#3a3f47] via-[#3d3d40] via-75% to-[#20303c] text-white">
        <div className="flex w-[93px] shrink-0 items-center pl-3">
          <S><path d="M0 3l8.700-1.200V9.300H0zM9.700 1.600 20 0v9.300H9.700zM0 10.500h8.700V18L0 17zM9.700 10.500H20V20L9.700 18.300z" fill="#fff" /></S>
          <div className="ml-[25px]"><S><circle cx="12" cy="7.500" r="6.500" stroke="#fff" strokeWidth="1.700" /><path d="M7.500 12.500.7 19.500" stroke="#fff" strokeWidth="2" /></S></div>
        </div>
        {task.map(([ic, st], i) => (
          <div key={i} className={`relative flex h-full w-[46px] shrink-0 items-center justify-center ${st === "a" ? "bg-[#62676e]" : ""}`}>
            {ic}
            {st && <span className={`absolute bottom-0 h-[3px] bg-[#76b9ed] ${st === "a" ? "w-[46px]" : "w-[35px]"}`} />}
          </div>
        ))}
        <div className="grow" />
        <div className="flex w-[40px] shrink-0">
          <S size={31} vb="0 0 32 32"><circle cx="16" cy="17" r="13" fill="#f59a23" /><circle cx="27.500" cy="5" r="4" fill="#c8281e" /><path d="M4 14C-1 14 0 8 4 8c1-6 9-6 10 0 5 0 5 6 0 6z" fill="#b9d0f2" /><path d="M17 31c-5 0-4-6 0-6 1-6 10-6 10 0 5 0 5 6 0 6z" fill="#b9d0f2" /></S>
        </div>
        <div className="w-[48px] shrink-0 pt-px text-[18px] tracking-[-0.9px]">31°C</div>
        <div className="w-[119px] shrink-0 whitespace-nowrap pt-px text-[18px] tracking-[-0.45px]">Deels zonnig</div>
        <Tray><S size={16} vb="0 0 16 16"><path d="m1 11 7-7 7 7" stroke="#fff" strokeWidth="1.300" /></S></Tray>
        <Tray><S><path d="M6 5.500h12.500v9H5V10M18.500 8H20v4h-1.500" stroke="#fff" strokeWidth="1.200" /><path d="M8 7.500h9v5H8z" fill="#fff" /><path d="M1 5h5v3H1zM2 3v2M5 3v2M3.500 8v2H5" stroke="#fff" /></S></Tray>
        <Tray><S><path d="M4 16c-5 0-5-6 0-6 1-6 8-7 10-2 6-1 8 8 2 8z" fill="#fff" /><path d="M4 10c1-6 8-7 10-2l-8 5z" fill="#bbb" /></S></Tray>
        <Tray><S><path d="M1 7.500h3L8.500 4v12L4 12.500H1z" stroke="#fff" strokeWidth="1.200" /><path d="M11 7.500c1.500 1.500 1.500 3.500 0 5M13.500 5.500c2.500 2.500 2.500 6.500 0 9" stroke="#fff" strokeWidth="1.200" /><path d="M16 3.500c3.500 3.500 3.500 9.500 0 13" stroke="#999" strokeWidth="1.200" /></S></Tray>
        <Tray><S><g stroke="#ddd" strokeWidth="1.300"><path d="M4 18C4 9 9 3.500 18 3" stroke="#999" /><path d="M7.500 18c0-6 4-10.500 10.500-11M11 18c0-4 3-7 7-7.500" /></g><circle cx="16" cy="16" r="1.800" fill="#fff" /></S></Tray>
        <Tray><S><path d="M10 1c3 1.500 5 2 8 2.200.5 8-2 13-8 16-6-3-8.500-8-8-16C5 3 7 2.500 10 1z" stroke="#3fae4e" strokeWidth="1.700" /><path d="m5 8 4 4 6-6" stroke="#3fae4e" strokeWidth="2.200" /></S></Tray>
        <div className="ml-[8px] w-[58px] shrink-0 pt-px text-[15px] tracking-[-0.8px]">15:51</div>
        <S><path d="M0 0h20v15h-7l-4 5v-5H0z" fill="#fff" /><path d="M4 4.500h12M4 8h12M4 11.500h8" stroke="#2c363e" strokeWidth="1.200" /><path d="M12.500 17.500c3 .5 4.500-2 4-5 4 2 3 7-.5 7-1.500 0-3-.8-3.500-2z" fill="#e8e8e8" stroke="#2c363e" strokeWidth="1.200" /></S>
        <div className="ml-[24px] mr-[5px] h-full w-px shrink-0 bg-[#6b757c]" />
      </div>
    </div>
  );
}
